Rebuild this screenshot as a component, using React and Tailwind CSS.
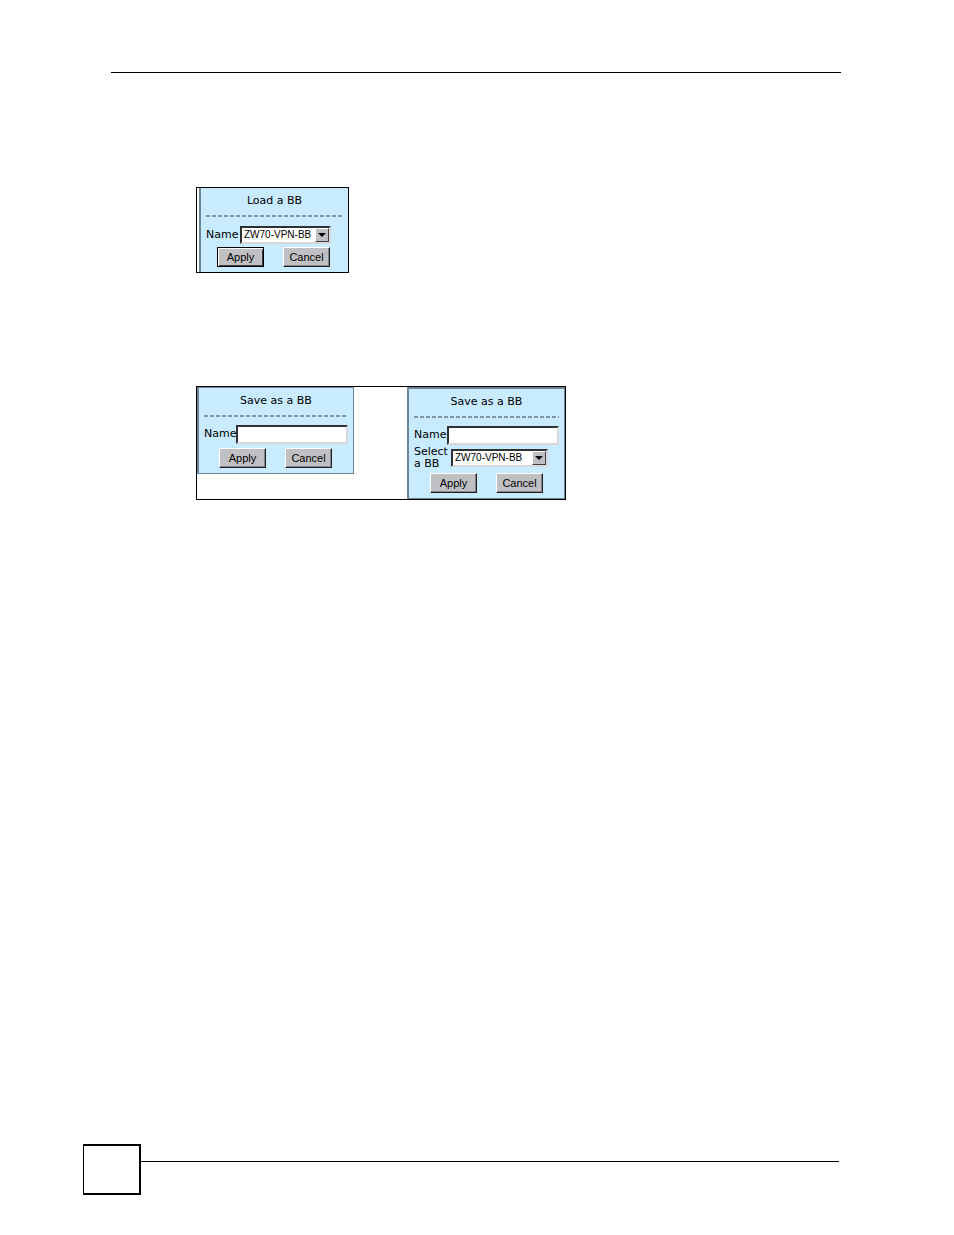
function Divider() {
  return (
    <div className="h-[2px] bg-[repeating-linear-gradient(90deg,#8295a3_0_4px,transparent_4px_6px)]" />
  );
}

function Panel({ title, className, children }) {
  return (
    <form
      className={`bg-[#c8ebff] border-[#6d8596] px-[5px] ${className}`}
      onSubmit={(e) => e.preventDefault()}
    >
      <h2 className="pt-[5px] pb-[6px] text-center text-[11px] leading-4">{title}</h2>
      <Divider />
      {children}
    </form>
  );
}

function Button({ focused, children }) {
  return (
    <button
      type="button"
      className={`w-[47px] h-5 bg-[#c0c0c4] border font-['Liberation_Sans',Arial,sans-serif] text-[11px] leading-4 text-center ${
        focused
          ? 'border-black shadow-[inset_1px_1px_0_#fff,inset_-1px_-1px_0_#404040]'
          : 'border-t-white border-l-white border-r-[#202020] border-b-[#202020] shadow-[inset_-1px_-1px_0_#85858a]'
      }`}
    >
      {children}
    </button>
  );
}

function Buttons({ focused, className }) {
  return (
    <div className={`flex gap-[19px] ${className}`}>
      <Button focused={focused}>Apply</Button>
      <Button>Cancel</Button>
    </div>
  );
}

function TextInput({ id }) {
  return (
    <input
      id={id}
      type="text"
      className="w-[112px] h-[19px] shrink-0 px-1 bg-white border-2 border-t-[#303030] border-l-[#303030] border-r-[#d8d8dc] border-b-[#d8d8dc] text-[11px] outline-none"
    />
  );
}

function Select({ id, className }) {
  return (
    <div className={`relative h-[18px] ${className}`}>
      <select
        id={id}
        className="appearance-none block w-full h-full pl-[2px] bg-white border-2 border-t-[#303030] border-l-[#303030] border-r-[#d8d8dc] border-b-[#d8d8dc] font-['Liberation_Sans',Arial,sans-serif] text-[10px] leading-[14px] outline-none"
      >
        <option>ZW70-VPN-BB</option>
      </select>
      <span className="absolute right-[2px] top-[2px] w-[14px] h-[14px] flex items-center justify-center bg-[#c0c0c4] border border-t-white border-l-white border-r-[#404040] border-b-[#404040] pointer-events-none">
        <svg width="8" height="4" viewBox="0 0 8 4" aria-hidden="true">
          <path d="M0 0h8L4 4z" fill="#000" />
        </svg>
      </span>
    </div>
  );
}

function App() {
  return (
    <div className="min-h-screen flex flex-col bg-white text-black font-['DejaVu_Sans',Verdana,sans-serif] text-[11px]">
      <header className="mt-[72px] ml-[111px] mr-[113px] border-t border-black" />

      <main className="ml-[196px] mt-[114px] flex flex-col items-start gap-[113px]">
        <section className="w-[153px] border border-black pl-[2px]">
          <Panel title="Load a BB" className="border-l-2 pb-[5px]">
            <div className="flex items-center mt-[9px]">
              <label htmlFor="load-name" className="w-[34px]">Name</label>
              <Select id="load-name" className="w-[91px]" />
            </div>
            <Buttons focused className="mt-[3px] ml-[11px]" />
          </Panel>
        </section>

        <section className="w-[370px] border border-black flex items-start justify-between">
          <Panel title="Save as a BB" className="w-[157px] border border-l-2 pb-[5px] mb-[25px]">
            <div className="flex items-center mt-2">
              <label htmlFor="save-name" className="w-8">Name</label>
              <TextInput id="save-name" />
            </div>
            <Buttons className="mt-1 ml-[15px]" />
          </Panel>
          <Panel title="Save as a BB" className="w-[158px] border border-t-2 border-l-2 pb-[5px]">
            <div className="flex items-center mt-2">
              <label htmlFor="save-as-name" className="w-[33px]">Name</label>
              <TextInput id="save-as-name" />
            </div>
            <div className="flex items-center mt-[1px]">
              <label htmlFor="save-as-bb" className="w-[37px] leading-3">Select a BB</label>
              <Select id="save-as-bb" className="w-[97px]" />
            </div>
            <Buttons className="mt-[3px] ml-4" />
          </Panel>
        </section>
      </main>

      <footer className="mt-auto mb-10 ml-[83px] mr-[115px] flex items-start">
        <div className="w-[58px] h-[51px] border-2 border-l border-black" />
        <div className="grow mt-[17px] border-t border-black" />
      </footer>
    </div>
  );
}

export default App;
